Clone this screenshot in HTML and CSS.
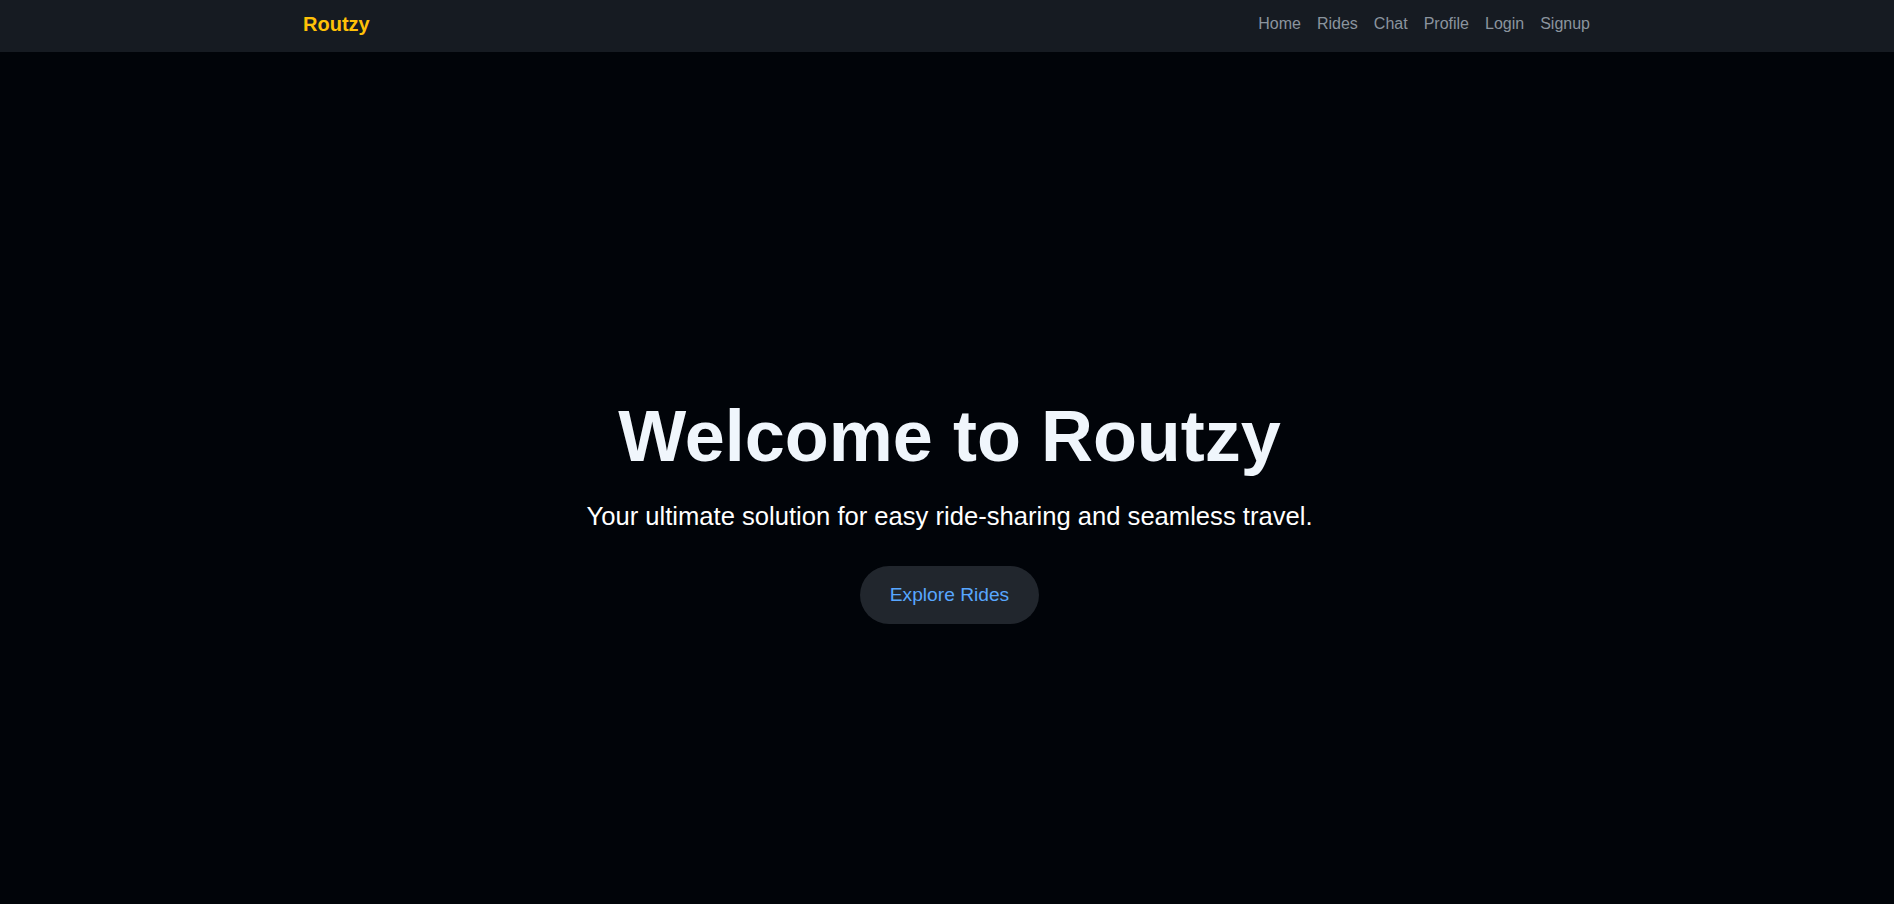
FILE: index.html
```html
<!DOCTYPE html>
<html lang="en">
<head>
<meta charset="utf-8">
<title>Routzy</title>
<link rel="stylesheet" href="styles.css">
</head>
<body>
  <nav class="navbar">
    <div class="container nav-inner">
      <a class="brand" href="#">Routzy</a>
      <ul class="nav-links">
        <li><a href="#">Home</a></li>
        <li><a href="#">Rides</a></li>
        <li><a href="#">Chat</a></li>
        <li><a href="#">Profile</a></li>
        <li><a href="#">Login</a></li>
        <li><a href="#">Signup</a></li>
      </ul>
    </div>
  </nav>
  <main class="hero">
    <h1 class="hero-title">Welcome to Routzy</h1>
    <p class="hero-sub">Your ultimate solution for easy ride-sharing and seamless travel.</p>
    <a class="hero-btn" href="#">Explore Rides</a>
  </main>
</body>
</html>
```

FILE: styles.css
```css
* { box-sizing: border-box; }

html, body {
  margin: 0;
  padding: 0;
  background: #010409;
  font-family: "Liberation Sans", Arial, sans-serif;
  overflow: hidden;
}

a { text-decoration: none; }

.navbar {
  background: #161b22;
  height: 52px;
  padding-top: 12px;
}

.container {
  max-width: 1320px;
  margin: 0 auto;
  padding: 0 12px;
}

.nav-inner {
  display: flex;
  justify-content: space-between;
  align-items: flex-start;
  padding-left: 16px;
  padding-right: 17px;
}

.brand {
  color: #ffc107;
  font-weight: 700;
  font-size: 20px;
  line-height: 24px;
}

.nav-links {
  list-style: none;
  margin: 0;
  padding: 0;
  display: flex;
  gap: 16px;
}

.nav-links a {
  color: #8b949e;
  font-size: 16px;
  line-height: 24px;
}

.hero {
  display: flex;
  flex-direction: column;
  align-items: center;
  padding-top: 341px;
  padding-left: 5px;
  text-align: center;
}

.hero-title {
  margin: 0 0 19px;
  color: #f0f6fc;
  font-size: 72px;
  line-height: 1.2;
  font-weight: 700;
}

.hero-sub {
  margin: 0 0 32px;
  color: #ffffff;
  font-size: 25.6px;
  line-height: 36px;
}

.hero-btn {
  display: inline-block;
  background: #21262d;
  color: #58a6ff;
  font-size: 19.2px;
  line-height: 28px;
  padding: 15px 30px;
  border-radius: 30px;
}
```
